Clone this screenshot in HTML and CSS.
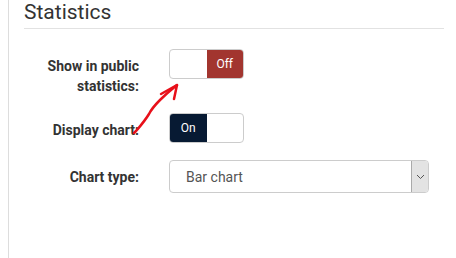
FILE: index.html
```html
<!DOCTYPE html>
<html lang="en">
<head>
    <meta charset="UTF-8">
    <title>Statistics</title>
    <link rel="stylesheet" href="styles.css">
</head>
<body>
    <div class="panel">
        <h2>Statistics</h2>
        <hr>
        <div class="form">
            <label class="label">Show in public statistics:</label>
            <div class="toggle">
                <span class="half"></span>
                <span class="half off">Off</span>
            </div>

            <label class="label">Display chart:</label>
            <div class="toggle">
                <span class="half on">On</span>
                <span class="half"></span>
            </div>

            <label class="label">Chart type:</label>
            <div class="select">
                <span class="value">Bar chart</span>
                <span class="caret">
                    <svg width="9" height="6" viewBox="0 0 9 6"><path d="M1 1 L4.5 4.5 L8 1" fill="none" stroke="#555" stroke-width="1"/></svg>
                </span>
            </div>
        </div>

        <!-- annotation -->
        <svg class="note" width="60" height="60" viewBox="0 0 60 60">
            <path d="M2 55 L5 52 C10 46 14 41 17 36 C20 30 24 26 28 22 C34 16 40 11 45 7"
                  fill="none" stroke="#e8101a" stroke-width="2.5" stroke-linecap="round"/>
            <path d="M29 16 L45 7 L42 21" fill="none" stroke="#e8101a" stroke-width="2.5" stroke-linecap="round" stroke-linejoin="round"/>
        </svg>
    </div>
</body>
</html>
```

FILE: styles.css
```css
body {
    margin: 0;
    font-family: Roboto, "Liberation Sans", sans-serif;
    color: #333;
    background: #fff;
}
.panel {
    position: relative;
    margin-left: 8px;
    width: 420px;
    height: 258px;
    padding: 0 15px;
    border-left: 1px solid #ddd;
    border-right: 1px solid #ddd;
}
h2 {
    margin: 0;
    padding-top: 1px;
    font-size: 21px;
    font-weight: 400;
    line-height: 23px;
    color: #333;
}
hr {
    margin: 4px 0 0 0;
    border: 0;
    border-top: 1px solid #e2e2e2;
}
.form {
    display: grid;
    grid-template-columns: 115px 260px;
    column-gap: 30px;
    row-gap: 17px;
    margin-top: 20px;
    align-items: start;
}
.label {
    padding-top: 7px;
    text-align: right;
    font-size: 14px;
    font-weight: 700;
    line-height: 20px;
    color: #333;
}
.toggle {
    display: flex;
    width: 73px;
    height: 28px;
    border: 1px solid #ccc;
    border-radius: 4px;
    overflow: hidden;
}
.half {
    flex: 1;
    display: flex;
    align-items: center;
    justify-content: center;
    font-size: 12px;
    color: #fff;
}
.off {
    background: #a2352f;
}
.on {
    background: #071a33;
}
.select {
    display: flex;
    height: 31px;
    border: 1px solid #ccc;
    border-radius: 4px;
    overflow: hidden;
}
.value {
    flex: 1;
    padding-left: 16px;
    font-size: 14px;
    line-height: 32px;
    color: #555;
}
.caret {
    width: 16px;
    display: flex;
    align-items: center;
    justify-content: center;
    background: #e3e3e3;
    border-left: 1px solid #aaa;
}
.note {
    position: absolute;
    left: 123px;
    top: 78px;
}
```
